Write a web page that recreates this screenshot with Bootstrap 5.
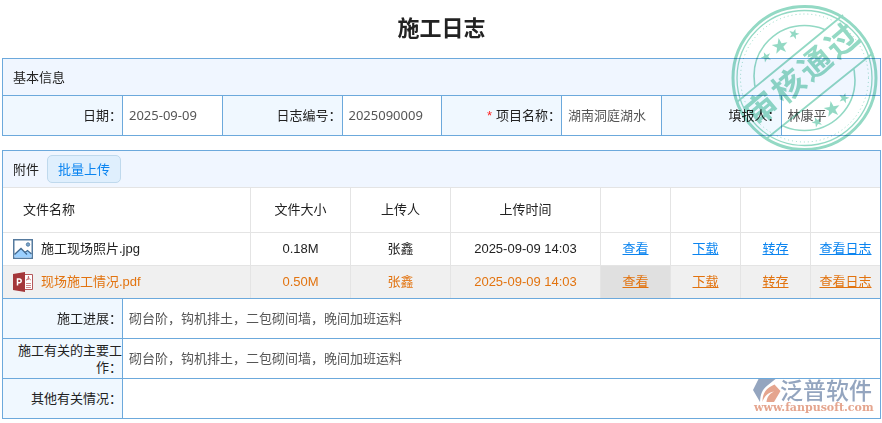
<!DOCTYPE html>
<html lang="zh-CN">
<head>
<meta charset="utf-8">
<meta name="viewport" content="width=device-width, initial-scale=1">
<title>施工日志</title>
<link href="https://cdn.jsdelivr.net/npm/bootstrap@5.3.0/dist/css/bootstrap.min.css" rel="stylesheet">
<style>
:root { --line: #6ca9dc; --label-bg: #f0f8ff; --head-bg: #f0f6ff; --grid: #e4e4e4; }
body { font: 13px/20px "Noto Sans", "Noto Sans CJK SC", sans-serif; color: #222; background: #fff; }
.sheet { padding: 11px 1px 0 2px; }
.page-title { font-size: 22px; line-height: 32px; font-weight: 700; margin-bottom: 15px; }
.panel { border: 1px solid var(--line); margin-bottom: 14px; }
.panel:last-child { margin-bottom: 0; }
.panel-head { background: var(--head-bg); height: 36px; padding: 0 10px; }
.field-row { border-top: 1px solid var(--line); }
.field { display: grid; grid-template-columns: 120px minmax(0, 1fr); flex: 1 1 0; min-height: 39px; }
.field-row > .field + .field { border-left: 1px solid var(--line); }
.field-label { background: var(--label-bg); border-right: 1px solid var(--line); line-height: 17px; }
.field-value { border: 0; outline: 0; background: transparent; color: #555; padding: 0 6px; width: 100%; height: 39px; line-height: 39px; resize: none; overflow: hidden; display: block; }
.required-mark { color: #f22; margin-right: 4px; font-family: "Liberation Sans", sans-serif; }
.upload-btn { font-size: 13px; line-height: 18px; color: #0a84f0; background: #dfeffd; border: 1px solid #bfd9ed; border-radius: 5px; padding: 4px 10px; }
.files { table-layout: fixed; width: 100%; text-align: center; font-family: "Liberation Sans", "Noto Sans CJK SC", sans-serif; border-collapse: separate; border-spacing: 0; }
.files th, .files td { padding: 0; border-top: 1px solid var(--grid); vertical-align: middle; text-align: center; }
.files th { font-weight: 400; height: 45px; }
.files td { height: 33px; }
.files th + th, .files td + td { border-left: 1px solid var(--grid); }
.files th:first-child { text-align: left; padding-left: 20px; }
.files td:first-child { text-align: left; padding-left: 10px; }
.files a { color: #0a84f0; text-decoration: underline; }
.files .picked, .files .picked a { color: #e2730f; }
.files .picked td { background: #f0f0f0; }
.files .picked td.current { background: #e0e0e0; }
.c-mid { width: 100px; }
.c-time { width: 150px; }
.c-act { width: 70px; }
.stamp { position: absolute; right: 0; top: -59px; pointer-events: none; mix-blend-mode: multiply; }
.stamp text { font: 700 32px "Noto Sans CJK SC", sans-serif; }
.brand { position: absolute; right: 4px; bottom: 2px; pointer-events: none; }
.brand .cn { font: 500 23px "Noto Sans CJK SC", sans-serif; }
.brand .url { font: 700 11px "DejaVu Serif", serif; }
</style>
</head>
<body>
<main class="sheet">
  <h1 class="page-title text-center">施工日志</h1>

  <section class="panel position-relative">
    <div class="panel-head d-flex align-items-center">基本信息</div>
    <div class="field-row d-flex">
      <div class="field">
        <label class="field-label d-flex align-items-center justify-content-end" for="f-date">日期：</label>
        <input class="field-value" id="f-date" type="text" value="2025-09-09">
      </div>
      <div class="field">
        <label class="field-label d-flex align-items-center justify-content-end" for="f-no">日志编号：</label>
        <input class="field-value" id="f-no" type="text" value="2025090009">
      </div>
      <div class="field">
        <label class="field-label d-flex align-items-center justify-content-end" for="f-project"><span class="required-mark">*</span>项目名称：</label>
        <input class="field-value" id="f-project" type="text" value="湖南洞庭湖水" required>
      </div>
      <div class="field">
        <label class="field-label d-flex align-items-center justify-content-end" for="f-user">填报人：</label>
        <input class="field-value" id="f-user" type="text" value="林康平">
      </div>
    </div>
    <svg class="stamp" width="150" height="156" viewBox="730 0 150 156" fill="none" stroke="#93d9c4" role="img" aria-label="审核通过">
      <defs>
        <path id="star" d="M0-8 2-2.500 8-2.500 3.200 1.200 5 7 0 3.500-5 7-3.200 1.200-8-2.500-2-2.500Z"/>
        <clipPath id="upper"><path d="M720-10H873L720 116Z"/></clipPath>
        <clipPath id="lower"><path d="M890 39V170H727Z"/></clipPath>
      </defs>
      <circle cx="804.500" cy="78" r="71.500" stroke-width="3"/>
      <circle cx="804.500" cy="78" r="67.500" stroke-width="1.300"/>
      <circle cx="804.500" cy="78" r="64" stroke-width="1" stroke-dasharray="1 3"/>
      <circle cx="804.500" cy="76" r="50.500" stroke-width="1.600" clip-path="url(#upper)"/>
      <circle cx="804.500" cy="80" r="50.500" stroke-width="1.600" clip-path="url(#lower)"/>
      <path d="M737 102 843 15M766 139 873 53" stroke-width="1.800"/>
      <g fill="#93d9c4" stroke="none">
        <use href="#star" transform="translate(780 46) rotate(-10)"/>
        <use href="#star" transform="translate(794 34) rotate(15) scale(.65)"/>
        <use href="#star" transform="translate(766 57) rotate(-25) scale(.65)"/>
        <use href="#star" transform="translate(832 109) rotate(-10)"/>
        <use href="#star" transform="translate(844 98) rotate(15) scale(.65)"/>
        <use href="#star" transform="translate(817 122) rotate(-25) scale(.65)"/>
        <g transform="translate(802 74) rotate(-40)" text-anchor="middle">
          <text x="-53" y="12">审</text><text x="-18" y="12">核</text><text x="17" y="12">通</text><text x="52" y="12">过</text>
        </g>
      </g>
    </svg>
  </section>

  <section class="panel position-relative">
    <div class="panel-head d-flex align-items-center gap-2">
      <span>附件</span>
      <button type="button" class="upload-btn">批量上传</button>
    </div>
    <table class="files">
      <colgroup>
        <col><col class="c-mid"><col class="c-mid"><col class="c-time">
        <col class="c-act"><col class="c-act"><col class="c-act"><col class="c-act">
      </colgroup>
      <thead>
        <tr><th>文件名称</th><th>文件大小</th><th>上传人</th><th>上传时间</th><th></th><th></th><th></th><th></th></tr>
      </thead>
      <tbody>
        <tr>
          <td><div class="d-flex align-items-center gap-2">
            <svg width="20" height="20" viewBox="0 0 20 20" aria-hidden="true"><rect x=".75" y=".75" width="18.500" height="18.500" fill="#fff" stroke="#557a9e" stroke-width="1.500"/><path d="M1.500 15.500 8 9.500l4 4 2.500-2 4 3.500v3.500h-17Z" fill="#9bd0ff"/><path d="M1.500 15.500 8 9.500l6 6M12 13.500l2.500-2 4 3.500" fill="none" stroke="#426a91" stroke-width="1.300"/><circle cx="15" cy="5.500" r="1.700" fill="#7ea6cb" stroke="#5580a8"/></svg>
            <span>施工现场照片.jpg</span></div></td>
          <td>0.18M</td><td>张鑫</td><td>2025-09-09 14:03</td>
          <td><a href="#">查看</a></td><td><a href="#">下载</a></td><td><a href="#">转存</a></td><td><a href="#">查看日志</a></td>
        </tr>
        <tr class="picked">
          <td><div class="d-flex align-items-center gap-2">
            <svg width="20" height="20" viewBox="0 0 20 20" aria-hidden="true"><path d="M11 2.500h8.500v15H11Z" fill="#fff" stroke="#b5585a"/><path d="M15.500 4v3.500h-2M15.500 4c-.3 2-1 3.500-2.500 4.500M15.500 5c.3 1.500 1 2.500 2.500 3M13 11.500h5M13 13.500h5M13 15.500h5" fill="none" stroke="#c06a6c" stroke-width=".8"/><path d="M0 2 12 0v20L0 18Z" fill="#a4373a"/><path d="M4.500 13.500V7h1.800a1.800 1.800 0 0 1 0 3.800H4.500" fill="none" stroke="#fff" stroke-width="1.500"/></svg>
            <span>现场施工情况.pdf</span></div></td>
          <td>0.50M</td><td>张鑫</td><td>2025-09-09 14:03</td>
          <td class="current"><a href="#">查看</a></td><td><a href="#">下载</a></td><td><a href="#">转存</a></td><td><a href="#">查看日志</a></td>
        </tr>
      </tbody>
    </table>
    <div class="field-row field">
      <label class="field-label d-flex align-items-center justify-content-end text-end" for="f-progress">施工进展：</label>
      <textarea class="field-value" id="f-progress" rows="1">砌台阶，钩机排土，二包砌间墙，晚间加班运料</textarea>
    </div>
    <div class="field-row field">
      <label class="field-label d-flex align-items-center justify-content-end text-end" for="f-work">施工有关的主要工作：</label>
      <textarea class="field-value" id="f-work" rows="1">砌台阶，钩机排土，二包砌间墙，晚间加班运料</textarea>
    </div>
    <div class="field-row field">
      <label class="field-label d-flex align-items-center justify-content-end text-end" for="f-other">其他有关情况：</label>
      <textarea class="field-value" id="f-other" rows="1"></textarea>
    </div>
    <svg class="brand" width="126" height="48" viewBox="750 368 126 48" role="img" aria-label="泛普软件">
      <path d="M758.500 379H775.500L768 385C762 389.500 760.500 394 760 402L753 390Z" fill="#94a5bf"/>
      <path d="M762.500 402C762.500 393 766 388 774.500 384.500L780.500 391 774 402H766.500C767 397.500 769 394 774 391.500 768 392.500 764 396.500 762.500 402Z" fill="#e5a58e"/>
      <text class="cn" x="780" y="399" fill="#94a5bf">泛普软件</text>
      <text class="url" x="754" y="411" fill="#e5a58e">www.fanpusoft.com</text>
    </svg>
  </section>
</main>
<script src="https://cdn.jsdelivr.net/npm/bootstrap@5.3.0/dist/js/bootstrap.bundle.min.js"></script>
</body>
</html>
